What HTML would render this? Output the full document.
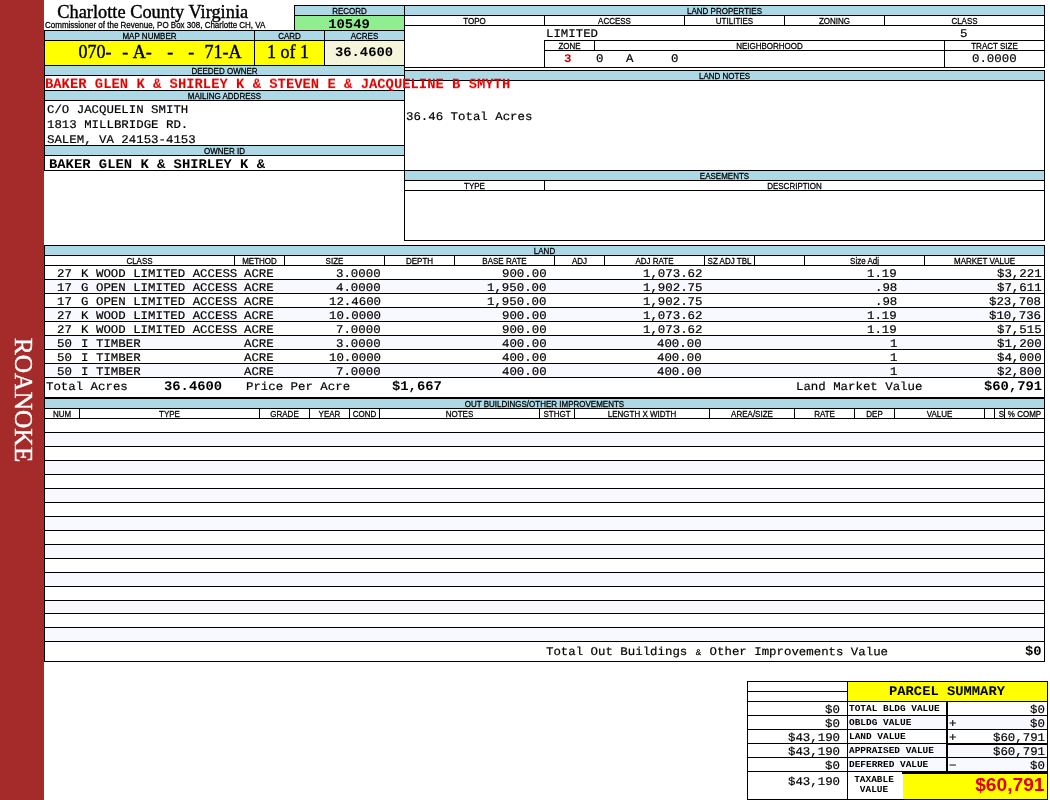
<!DOCTYPE html>
<html><head><meta charset="utf-8"><title>Property Card</title>
<style>
html,body{margin:0;padding:0;background:#fff;}
body{width:1050px;height:800px;position:relative;overflow:hidden;font-family:"Liberation Sans",sans-serif;color:#000;}
.b{position:absolute;box-sizing:border-box;border:1px solid #000;}
.r{position:absolute;}
.x{position:absolute;white-space:pre;}
.s{font-family:"Liberation Sans",sans-serif;}
.t{font-family:"Liberation Serif",serif;-webkit-text-stroke:0.4px #000;}
.m{font-family:"Liberation Mono",monospace;-webkit-text-stroke:0.2px #000;}
.mb{font-family:"Liberation Mono",monospace;font-weight:bold;}
.sb{font-family:"Liberation Sans",sans-serif;font-weight:bold;}
#pg{position:absolute;left:0;top:0;width:1050px;height:800px;will-change:transform;}
</style></head><body><div id="pg">
<div class="r" style="left:0px;top:0px;width:44px;height:800px;background:#A52A2A"></div>
<div class="x t" style="left:-77px;top:385px;width:200px;height:30px;line-height:30px;font-size:25.5px;color:#fff;-webkit-text-stroke:0.4px #fff;text-align:center;transform:rotate(90deg);">ROANOKE</div>
<div class="x t" style="top:1px;font-size:18.35px;line-height:22px;height:22px;left:57.3px;">Charlotte County Virginia</div>
<div class="x s" style="top:20px;font-size:8px;line-height:11px;height:11px;left:45px;transform-origin:50% 8px;transform:scaleY(1.06);-webkit-text-stroke:0.25px #000;">Commissioner of the Revenue, PO Box 308, Charlotte CH, VA</div>
<div class="b" style="left:294px;top:5px;width:111px;height:11px;background:#ADD8E6;"></div>
<div class="x s" style="top:6px;font-size:8px;line-height:11px;height:11px;left:49.5px;width:600px;text-align:center;transform-origin:50% 8px;transform:scaleY(1.06);-webkit-text-stroke:0.25px #000;">RECORD</div>
<div class="b" style="left:294px;top:15px;width:111px;height:16px;background:#90EE90;"></div>
<div class="x mb" style="top:15px;font-size:13.85px;line-height:18px;height:18px;left:49px;width:600px;text-align:center;transform-origin:50% 13px;transform:rotate(0.03deg) scaleY(0.95);">10549</div>
<div class="b" style="left:44px;top:30px;width:211px;height:11px;background:#ADD8E6;"></div>
<div class="x s" style="top:31px;font-size:8px;line-height:11px;height:11px;left:-150.5px;width:600px;text-align:center;transform-origin:50% 8px;transform:scaleY(1.06);-webkit-text-stroke:0.25px #000;">MAP NUMBER</div>
<div class="b" style="left:254px;top:30px;width:71px;height:11px;background:#ADD8E6;"></div>
<div class="x s" style="top:31px;font-size:8px;line-height:11px;height:11px;left:-10.5px;width:600px;text-align:center;transform-origin:50% 8px;transform:scaleY(1.06);-webkit-text-stroke:0.25px #000;">CARD</div>
<div class="b" style="left:324px;top:30px;width:81px;height:11px;background:#ADD8E6;"></div>
<div class="x s" style="top:31px;font-size:8px;line-height:11px;height:11px;left:64.5px;width:600px;text-align:center;transform-origin:50% 8px;transform:scaleY(1.06);-webkit-text-stroke:0.25px #000;">ACRES</div>
<div class="b" style="left:44px;top:40px;width:211px;height:26px;background:#FFFF00;"></div>
<div class="b" style="left:254px;top:40px;width:71px;height:26px;background:#FFFF00;"></div>
<div class="b" style="left:324px;top:40px;width:81px;height:26px;background:#F5F5DC;"></div>
<div class="x t" style="top:41px;font-size:18px;line-height:22px;height:22px;left:78.6px;">070-</div>
<div class="x t" style="top:41px;font-size:18px;line-height:22px;height:22px;left:122.3px;">-</div>
<div class="x t" style="top:41px;font-size:18px;line-height:22px;height:22px;left:132.7px;">A-</div>
<div class="x t" style="top:41px;font-size:18px;line-height:22px;height:22px;left:167.3px;">-</div>
<div class="x t" style="top:41px;font-size:18px;line-height:22px;height:22px;left:188.3px;">-</div>
<div class="x t" style="top:41px;font-size:18px;line-height:22px;height:22px;left:204.6px;">71-A</div>
<div class="x t" style="top:41px;font-size:18px;line-height:22px;height:22px;left:-12px;width:600px;text-align:center;">1 of 1</div>
<div class="x mb" style="top:43px;font-size:13.85px;line-height:18px;height:18px;left:64px;width:600px;text-align:center;transform-origin:50% 13px;transform:rotate(0.03deg) scaleY(0.95);">36.4600</div>
<div class="b" style="left:44px;top:65px;width:361px;height:11px;background:#ADD8E6;"></div>
<div class="x s" style="top:66px;font-size:8px;line-height:11px;height:11px;left:-75.5px;width:600px;text-align:center;transform-origin:50% 8px;transform:scaleY(1.06);-webkit-text-stroke:0.25px #000;">DEEDED OWNER</div>
<div class="b" style="left:44px;top:75px;width:361px;height:16px;"></div>
<div class="b" style="left:44px;top:90px;width:361px;height:11px;background:#ADD8E6;"></div>
<div class="x s" style="top:91px;font-size:8px;line-height:11px;height:11px;left:-75.5px;width:600px;text-align:center;transform-origin:50% 8px;transform:scaleY(1.06);-webkit-text-stroke:0.25px #000;">MAILING ADDRESS</div>
<div class="b" style="left:44px;top:100px;width:361px;height:46px;"></div>
<div class="x m" style="top:102px;font-size:12.4px;line-height:16px;height:16px;left:47px;transform-origin:0 11px;transform:rotate(0.03deg) scaleY(0.95);">C/O JACQUELIN SMITH</div>
<div class="x m" style="top:117px;font-size:12.4px;line-height:16px;height:16px;left:47px;transform-origin:0 11px;transform:rotate(0.03deg) scaleY(0.95);">1813 MILLBRIDGE RD.</div>
<div class="x m" style="top:132px;font-size:12.4px;line-height:16px;height:16px;left:47px;transform-origin:0 11px;transform:rotate(0.03deg) scaleY(0.95);">SALEM, VA 24153-4153</div>
<div class="b" style="left:44px;top:145px;width:361px;height:11px;background:#ADD8E6;"></div>
<div class="x s" style="top:146px;font-size:8px;line-height:11px;height:11px;left:-75.5px;width:600px;text-align:center;transform-origin:50% 8px;transform:scaleY(1.06);-webkit-text-stroke:0.25px #000;">OWNER ID</div>
<div class="b" style="left:44px;top:155px;width:361px;height:16px;"></div>
<div class="x mb" style="top:155px;font-size:13.85px;line-height:18px;height:18px;left:49px;transform-origin:0 13px;transform:rotate(0.03deg) scaleY(0.95);">BAKER GLEN K &amp; SHIRLEY K &amp;</div>
<div class="b" style="left:404px;top:5px;width:641px;height:236px;"></div>
<div class="b" style="left:404px;top:5px;width:641px;height:11px;background:#ADD8E6;"></div>
<div class="x s" style="top:6px;font-size:8px;line-height:11px;height:11px;left:424.5px;width:600px;text-align:center;transform-origin:50% 8px;transform:scaleY(1.06);-webkit-text-stroke:0.25px #000;">LAND PROPERTIES</div>
<div class="b" style="left:404px;top:15px;width:141px;height:11px;"></div>
<div class="x s" style="top:16px;font-size:8px;line-height:11px;height:11px;left:174.5px;width:600px;text-align:center;transform-origin:50% 8px;transform:scaleY(1.06);-webkit-text-stroke:0.25px #000;">TOPO</div>
<div class="b" style="left:544px;top:15px;width:141px;height:11px;"></div>
<div class="x s" style="top:16px;font-size:8px;line-height:11px;height:11px;left:314.5px;width:600px;text-align:center;transform-origin:50% 8px;transform:scaleY(1.06);-webkit-text-stroke:0.25px #000;">ACCESS</div>
<div class="b" style="left:684px;top:15px;width:101px;height:11px;"></div>
<div class="x s" style="top:16px;font-size:8px;line-height:11px;height:11px;left:434.5px;width:600px;text-align:center;transform-origin:50% 8px;transform:scaleY(1.06);-webkit-text-stroke:0.25px #000;">UTILITIES</div>
<div class="b" style="left:784px;top:15px;width:101px;height:11px;"></div>
<div class="x s" style="top:16px;font-size:8px;line-height:11px;height:11px;left:534.5px;width:600px;text-align:center;transform-origin:50% 8px;transform:scaleY(1.06);-webkit-text-stroke:0.25px #000;">ZONING</div>
<div class="b" style="left:884px;top:15px;width:161px;height:11px;"></div>
<div class="x s" style="top:16px;font-size:8px;line-height:11px;height:11px;left:664.5px;width:600px;text-align:center;transform-origin:50% 8px;transform:scaleY(1.06);-webkit-text-stroke:0.25px #000;">CLASS</div>
<div class="b" style="left:404px;top:25px;width:641px;height:43px;"></div>
<div class="b" style="left:544px;top:40px;width:51px;height:11px;"></div>
<div class="x s" style="top:41px;font-size:8px;line-height:11px;height:11px;left:269.5px;width:600px;text-align:center;transform-origin:50% 8px;transform:scaleY(1.06);-webkit-text-stroke:0.25px #000;">ZONE</div>
<div class="b" style="left:594px;top:40px;width:351px;height:11px;"></div>
<div class="x s" style="top:41px;font-size:8px;line-height:11px;height:11px;left:469.5px;width:600px;text-align:center;transform-origin:50% 8px;transform:scaleY(1.06);-webkit-text-stroke:0.25px #000;">NEIGHBORHOOD</div>
<div class="b" style="left:944px;top:40px;width:101px;height:11px;"></div>
<div class="x s" style="top:41px;font-size:8px;line-height:11px;height:11px;left:694.5px;width:600px;text-align:center;transform-origin:50% 8px;transform:scaleY(1.06);-webkit-text-stroke:0.25px #000;">TRACT SIZE</div>
<div class="b" style="left:544px;top:50px;width:401px;height:18px;"></div>
<div class="b" style="left:944px;top:50px;width:101px;height:18px;"></div>
<div class="r" style="left:405px;top:68px;width:640px;height:2px;background:#fff"></div>
<div class="x m" style="top:26px;font-size:12.4px;line-height:16px;height:16px;left:546px;transform-origin:0 11px;transform:rotate(0.03deg) scaleY(0.95);">LIMITED</div>
<div class="x m" style="top:26px;font-size:12.4px;line-height:16px;height:16px;left:960px;transform-origin:0 11px;transform:rotate(0.03deg) scaleY(0.95);">5</div>
<div class="x mb" style="top:50.6px;font-size:12.4px;line-height:16px;height:16px;left:564px;transform-origin:0 11px;transform:rotate(0.03deg) scaleY(0.95);color:#c00;">3</div>
<div class="x m" style="top:50.6px;font-size:12.4px;line-height:16px;height:16px;left:596px;transform-origin:0 11px;transform:rotate(0.03deg) scaleY(0.95);">0</div>
<div class="x m" style="top:50.6px;font-size:12.4px;line-height:16px;height:16px;left:626px;transform-origin:0 11px;transform:rotate(0.03deg) scaleY(0.95);">A</div>
<div class="x m" style="top:50.6px;font-size:12.4px;line-height:16px;height:16px;left:671px;transform-origin:0 11px;transform:rotate(0.03deg) scaleY(0.95);">0</div>
<div class="x m" style="top:50.6px;font-size:12.4px;line-height:16px;height:16px;left:972px;transform-origin:0 11px;transform:rotate(0.03deg) scaleY(0.95);">0.0000</div>
<div class="b" style="left:404px;top:70px;width:641px;height:11px;background:#ADD8E6;"></div>
<div class="x s" style="top:71px;font-size:8px;line-height:11px;height:11px;left:424.5px;width:600px;text-align:center;transform-origin:50% 8px;transform:scaleY(1.06);-webkit-text-stroke:0.25px #000;">LAND NOTES</div>
<div class="x m" style="top:109px;font-size:12.4px;line-height:16px;height:16px;left:406px;transform-origin:0 11px;transform:rotate(0.03deg) scaleY(0.95);">36.46 Total Acres</div>
<div class="b" style="left:404px;top:170px;width:641px;height:11px;background:#ADD8E6;"></div>
<div class="x s" style="top:171px;font-size:8px;line-height:11px;height:11px;left:424.5px;width:600px;text-align:center;transform-origin:50% 8px;transform:scaleY(1.06);-webkit-text-stroke:0.25px #000;">EASEMENTS</div>
<div class="b" style="left:404px;top:180px;width:141px;height:11px;"></div>
<div class="x s" style="top:181px;font-size:8px;line-height:11px;height:11px;left:174.5px;width:600px;text-align:center;transform-origin:50% 8px;transform:scaleY(1.06);-webkit-text-stroke:0.25px #000;">TYPE</div>
<div class="b" style="left:544px;top:180px;width:501px;height:11px;"></div>
<div class="x s" style="top:181px;font-size:8px;line-height:11px;height:11px;left:494.5px;width:600px;text-align:center;transform-origin:50% 8px;transform:scaleY(1.06);-webkit-text-stroke:0.25px #000;">DESCRIPTION</div>
<div class="x mb" style="top:75px;font-size:13.85px;line-height:18px;height:18px;left:45px;transform-origin:0 13px;transform:rotate(0.03deg) scaleY(0.95);color:#e00000;">BAKER GLEN K &amp; SHIRLEY K &amp; STEVEN E &amp; JACQUELINE B SMYTH</div>
<div class="b" style="left:44px;top:245px;width:1001px;height:11px;background:#ADD8E6;"></div>
<div class="x s" style="top:246px;font-size:8px;line-height:11px;height:11px;left:244.5px;width:600px;text-align:center;transform-origin:50% 8px;transform:scaleY(1.06);-webkit-text-stroke:0.25px #000;">LAND</div>
<div class="b" style="left:44px;top:255px;width:191px;height:11px;"></div>
<div class="x s" style="top:256px;font-size:8px;line-height:11px;height:11px;left:-160.5px;width:600px;text-align:center;transform-origin:50% 8px;transform:scaleY(1.06);-webkit-text-stroke:0.25px #000;">CLASS</div>
<div class="b" style="left:234px;top:255px;width:51px;height:11px;"></div>
<div class="x s" style="top:256px;font-size:8px;line-height:11px;height:11px;left:-40.5px;width:600px;text-align:center;transform-origin:50% 8px;transform:scaleY(1.06);-webkit-text-stroke:0.25px #000;">METHOD</div>
<div class="b" style="left:284px;top:255px;width:101px;height:11px;"></div>
<div class="x s" style="top:256px;font-size:8px;line-height:11px;height:11px;left:34.5px;width:600px;text-align:center;transform-origin:50% 8px;transform:scaleY(1.06);-webkit-text-stroke:0.25px #000;">SIZE</div>
<div class="b" style="left:384px;top:255px;width:71px;height:11px;"></div>
<div class="x s" style="top:256px;font-size:8px;line-height:11px;height:11px;left:119.5px;width:600px;text-align:center;transform-origin:50% 8px;transform:scaleY(1.06);-webkit-text-stroke:0.25px #000;">DEPTH</div>
<div class="b" style="left:454px;top:255px;width:101px;height:11px;"></div>
<div class="x s" style="top:256px;font-size:8px;line-height:11px;height:11px;left:204.5px;width:600px;text-align:center;transform-origin:50% 8px;transform:scaleY(1.06);-webkit-text-stroke:0.25px #000;">BASE RATE</div>
<div class="b" style="left:554px;top:255px;width:51px;height:11px;"></div>
<div class="x s" style="top:256px;font-size:8px;line-height:11px;height:11px;left:279.5px;width:600px;text-align:center;transform-origin:50% 8px;transform:scaleY(1.06);-webkit-text-stroke:0.25px #000;">ADJ</div>
<div class="b" style="left:604px;top:255px;width:101px;height:11px;"></div>
<div class="x s" style="top:256px;font-size:8px;line-height:11px;height:11px;left:354.5px;width:600px;text-align:center;transform-origin:50% 8px;transform:scaleY(1.06);-webkit-text-stroke:0.25px #000;">ADJ RATE</div>
<div class="b" style="left:704px;top:255px;width:51px;height:11px;"></div>
<div class="x s" style="top:256px;font-size:8px;line-height:11px;height:11px;left:429.5px;width:600px;text-align:center;transform-origin:50% 8px;transform:scaleY(1.06);-webkit-text-stroke:0.25px #000;">SZ ADJ TBL</div>
<div class="b" style="left:754px;top:255px;width:51px;height:11px;"></div>
<div class="b" style="left:804px;top:255px;width:121px;height:11px;"></div>
<div class="x s" style="top:256px;font-size:8px;line-height:11px;height:11px;left:564.5px;width:600px;text-align:center;transform-origin:50% 8px;transform:scaleY(1.06);-webkit-text-stroke:0.25px #000;">Size Adj</div>
<div class="b" style="left:924px;top:255px;width:121px;height:11px;"></div>
<div class="x s" style="top:256px;font-size:8px;line-height:11px;height:11px;left:684.5px;width:600px;text-align:center;transform-origin:50% 8px;transform:scaleY(1.06);-webkit-text-stroke:0.25px #000;">MARKET VALUE</div>
<div class="b" style="left:44px;top:265px;width:1001px;height:15px;background:#fff;"></div>
<div class="x m" style="top:266px;font-size:12.4px;line-height:16px;height:16px;left:57px;transform-origin:0 11px;transform:rotate(0.03deg) scaleY(0.95);">27</div>
<div class="x m" style="top:266px;font-size:12.4px;line-height:16px;height:16px;left:80.5px;transform-origin:0 11px;transform:rotate(0.03deg) scaleY(0.95);">K</div>
<div class="x m" style="top:266px;font-size:12.4px;line-height:16px;height:16px;left:95.5px;transform-origin:0 11px;transform:rotate(0.03deg) scaleY(0.95);">WOOD LIMITED ACCESS</div>
<div class="x m" style="top:266px;font-size:12.4px;line-height:16px;height:16px;left:243.5px;transform-origin:0 11px;transform:rotate(0.03deg) scaleY(0.95);">ACRE</div>
<div class="x m" style="top:266px;font-size:12.4px;line-height:16px;height:16px;right:669px;text-align:right;transform-origin:100% 11px;transform:rotate(0.03deg) scaleY(0.95);">3.0000</div>
<div class="x m" style="top:266px;font-size:12.4px;line-height:16px;height:16px;right:503.5px;text-align:right;transform-origin:100% 11px;transform:rotate(0.03deg) scaleY(0.95);">900.00</div>
<div class="x m" style="top:266px;font-size:12.4px;line-height:16px;height:16px;right:348px;text-align:right;transform-origin:100% 11px;transform:rotate(0.03deg) scaleY(0.95);">1,073.62</div>
<div class="x m" style="top:266px;font-size:12.4px;line-height:16px;height:16px;right:153px;text-align:right;transform-origin:100% 11px;transform:rotate(0.03deg) scaleY(0.95);">1.19</div>
<div class="x m" style="top:266px;font-size:12.4px;line-height:16px;height:16px;right:8.5px;text-align:right;transform-origin:100% 11px;transform:rotate(0.03deg) scaleY(0.95);">$3,221</div>
<div class="b" style="left:44px;top:279px;width:1001px;height:15px;background:#F8F8FF;"></div>
<div class="x m" style="top:280px;font-size:12.4px;line-height:16px;height:16px;left:57px;transform-origin:0 11px;transform:rotate(0.03deg) scaleY(0.95);">17</div>
<div class="x m" style="top:280px;font-size:12.4px;line-height:16px;height:16px;left:80.5px;transform-origin:0 11px;transform:rotate(0.03deg) scaleY(0.95);">G</div>
<div class="x m" style="top:280px;font-size:12.4px;line-height:16px;height:16px;left:95.5px;transform-origin:0 11px;transform:rotate(0.03deg) scaleY(0.95);">OPEN LIMITED ACCESS</div>
<div class="x m" style="top:280px;font-size:12.4px;line-height:16px;height:16px;left:243.5px;transform-origin:0 11px;transform:rotate(0.03deg) scaleY(0.95);">ACRE</div>
<div class="x m" style="top:280px;font-size:12.4px;line-height:16px;height:16px;right:669px;text-align:right;transform-origin:100% 11px;transform:rotate(0.03deg) scaleY(0.95);">4.0000</div>
<div class="x m" style="top:280px;font-size:12.4px;line-height:16px;height:16px;right:503.5px;text-align:right;transform-origin:100% 11px;transform:rotate(0.03deg) scaleY(0.95);">1,950.00</div>
<div class="x m" style="top:280px;font-size:12.4px;line-height:16px;height:16px;right:348px;text-align:right;transform-origin:100% 11px;transform:rotate(0.03deg) scaleY(0.95);">1,902.75</div>
<div class="x m" style="top:280px;font-size:12.4px;line-height:16px;height:16px;right:153px;text-align:right;transform-origin:100% 11px;transform:rotate(0.03deg) scaleY(0.95);">.98</div>
<div class="x m" style="top:280px;font-size:12.4px;line-height:16px;height:16px;right:8.5px;text-align:right;transform-origin:100% 11px;transform:rotate(0.03deg) scaleY(0.95);">$7,611</div>
<div class="b" style="left:44px;top:293px;width:1001px;height:15px;background:#fff;"></div>
<div class="x m" style="top:294px;font-size:12.4px;line-height:16px;height:16px;left:57px;transform-origin:0 11px;transform:rotate(0.03deg) scaleY(0.95);">17</div>
<div class="x m" style="top:294px;font-size:12.4px;line-height:16px;height:16px;left:80.5px;transform-origin:0 11px;transform:rotate(0.03deg) scaleY(0.95);">G</div>
<div class="x m" style="top:294px;font-size:12.4px;line-height:16px;height:16px;left:95.5px;transform-origin:0 11px;transform:rotate(0.03deg) scaleY(0.95);">OPEN LIMITED ACCESS</div>
<div class="x m" style="top:294px;font-size:12.4px;line-height:16px;height:16px;left:243.5px;transform-origin:0 11px;transform:rotate(0.03deg) scaleY(0.95);">ACRE</div>
<div class="x m" style="top:294px;font-size:12.4px;line-height:16px;height:16px;right:669px;text-align:right;transform-origin:100% 11px;transform:rotate(0.03deg) scaleY(0.95);">12.4600</div>
<div class="x m" style="top:294px;font-size:12.4px;line-height:16px;height:16px;right:503.5px;text-align:right;transform-origin:100% 11px;transform:rotate(0.03deg) scaleY(0.95);">1,950.00</div>
<div class="x m" style="top:294px;font-size:12.4px;line-height:16px;height:16px;right:348px;text-align:right;transform-origin:100% 11px;transform:rotate(0.03deg) scaleY(0.95);">1,902.75</div>
<div class="x m" style="top:294px;font-size:12.4px;line-height:16px;height:16px;right:153px;text-align:right;transform-origin:100% 11px;transform:rotate(0.03deg) scaleY(0.95);">.98</div>
<div class="x m" style="top:294px;font-size:12.4px;line-height:16px;height:16px;right:8.5px;text-align:right;transform-origin:100% 11px;transform:rotate(0.03deg) scaleY(0.95);">$23,708</div>
<div class="b" style="left:44px;top:307px;width:1001px;height:15px;background:#F8F8FF;"></div>
<div class="x m" style="top:308px;font-size:12.4px;line-height:16px;height:16px;left:57px;transform-origin:0 11px;transform:rotate(0.03deg) scaleY(0.95);">27</div>
<div class="x m" style="top:308px;font-size:12.4px;line-height:16px;height:16px;left:80.5px;transform-origin:0 11px;transform:rotate(0.03deg) scaleY(0.95);">K</div>
<div class="x m" style="top:308px;font-size:12.4px;line-height:16px;height:16px;left:95.5px;transform-origin:0 11px;transform:rotate(0.03deg) scaleY(0.95);">WOOD LIMITED ACCESS</div>
<div class="x m" style="top:308px;font-size:12.4px;line-height:16px;height:16px;left:243.5px;transform-origin:0 11px;transform:rotate(0.03deg) scaleY(0.95);">ACRE</div>
<div class="x m" style="top:308px;font-size:12.4px;line-height:16px;height:16px;right:669px;text-align:right;transform-origin:100% 11px;transform:rotate(0.03deg) scaleY(0.95);">10.0000</div>
<div class="x m" style="top:308px;font-size:12.4px;line-height:16px;height:16px;right:503.5px;text-align:right;transform-origin:100% 11px;transform:rotate(0.03deg) scaleY(0.95);">900.00</div>
<div class="x m" style="top:308px;font-size:12.4px;line-height:16px;height:16px;right:348px;text-align:right;transform-origin:100% 11px;transform:rotate(0.03deg) scaleY(0.95);">1,073.62</div>
<div class="x m" style="top:308px;font-size:12.4px;line-height:16px;height:16px;right:153px;text-align:right;transform-origin:100% 11px;transform:rotate(0.03deg) scaleY(0.95);">1.19</div>
<div class="x m" style="top:308px;font-size:12.4px;line-height:16px;height:16px;right:8.5px;text-align:right;transform-origin:100% 11px;transform:rotate(0.03deg) scaleY(0.95);">$10,736</div>
<div class="b" style="left:44px;top:321px;width:1001px;height:15px;background:#fff;"></div>
<div class="x m" style="top:322px;font-size:12.4px;line-height:16px;height:16px;left:57px;transform-origin:0 11px;transform:rotate(0.03deg) scaleY(0.95);">27</div>
<div class="x m" style="top:322px;font-size:12.4px;line-height:16px;height:16px;left:80.5px;transform-origin:0 11px;transform:rotate(0.03deg) scaleY(0.95);">K</div>
<div class="x m" style="top:322px;font-size:12.4px;line-height:16px;height:16px;left:95.5px;transform-origin:0 11px;transform:rotate(0.03deg) scaleY(0.95);">WOOD LIMITED ACCESS</div>
<div class="x m" style="top:322px;font-size:12.4px;line-height:16px;height:16px;left:243.5px;transform-origin:0 11px;transform:rotate(0.03deg) scaleY(0.95);">ACRE</div>
<div class="x m" style="top:322px;font-size:12.4px;line-height:16px;height:16px;right:669px;text-align:right;transform-origin:100% 11px;transform:rotate(0.03deg) scaleY(0.95);">7.0000</div>
<div class="x m" style="top:322px;font-size:12.4px;line-height:16px;height:16px;right:503.5px;text-align:right;transform-origin:100% 11px;transform:rotate(0.03deg) scaleY(0.95);">900.00</div>
<div class="x m" style="top:322px;font-size:12.4px;line-height:16px;height:16px;right:348px;text-align:right;transform-origin:100% 11px;transform:rotate(0.03deg) scaleY(0.95);">1,073.62</div>
<div class="x m" style="top:322px;font-size:12.4px;line-height:16px;height:16px;right:153px;text-align:right;transform-origin:100% 11px;transform:rotate(0.03deg) scaleY(0.95);">1.19</div>
<div class="x m" style="top:322px;font-size:12.4px;line-height:16px;height:16px;right:8.5px;text-align:right;transform-origin:100% 11px;transform:rotate(0.03deg) scaleY(0.95);">$7,515</div>
<div class="b" style="left:44px;top:335px;width:1001px;height:15px;background:#F8F8FF;"></div>
<div class="x m" style="top:336px;font-size:12.4px;line-height:16px;height:16px;left:57px;transform-origin:0 11px;transform:rotate(0.03deg) scaleY(0.95);">50</div>
<div class="x m" style="top:336px;font-size:12.4px;line-height:16px;height:16px;left:80.5px;transform-origin:0 11px;transform:rotate(0.03deg) scaleY(0.95);">I</div>
<div class="x m" style="top:336px;font-size:12.4px;line-height:16px;height:16px;left:95.5px;transform-origin:0 11px;transform:rotate(0.03deg) scaleY(0.95);">TIMBER</div>
<div class="x m" style="top:336px;font-size:12.4px;line-height:16px;height:16px;left:243.5px;transform-origin:0 11px;transform:rotate(0.03deg) scaleY(0.95);">ACRE</div>
<div class="x m" style="top:336px;font-size:12.4px;line-height:16px;height:16px;right:669px;text-align:right;transform-origin:100% 11px;transform:rotate(0.03deg) scaleY(0.95);">3.0000</div>
<div class="x m" style="top:336px;font-size:12.4px;line-height:16px;height:16px;right:503.5px;text-align:right;transform-origin:100% 11px;transform:rotate(0.03deg) scaleY(0.95);">400.00</div>
<div class="x m" style="top:336px;font-size:12.4px;line-height:16px;height:16px;right:348px;text-align:right;transform-origin:100% 11px;transform:rotate(0.03deg) scaleY(0.95);">400.00</div>
<div class="x m" style="top:336px;font-size:12.4px;line-height:16px;height:16px;right:153px;text-align:right;transform-origin:100% 11px;transform:rotate(0.03deg) scaleY(0.95);">1</div>
<div class="x m" style="top:336px;font-size:12.4px;line-height:16px;height:16px;right:8.5px;text-align:right;transform-origin:100% 11px;transform:rotate(0.03deg) scaleY(0.95);">$1,200</div>
<div class="b" style="left:44px;top:349px;width:1001px;height:15px;background:#fff;"></div>
<div class="x m" style="top:350px;font-size:12.4px;line-height:16px;height:16px;left:57px;transform-origin:0 11px;transform:rotate(0.03deg) scaleY(0.95);">50</div>
<div class="x m" style="top:350px;font-size:12.4px;line-height:16px;height:16px;left:80.5px;transform-origin:0 11px;transform:rotate(0.03deg) scaleY(0.95);">I</div>
<div class="x m" style="top:350px;font-size:12.4px;line-height:16px;height:16px;left:95.5px;transform-origin:0 11px;transform:rotate(0.03deg) scaleY(0.95);">TIMBER</div>
<div class="x m" style="top:350px;font-size:12.4px;line-height:16px;height:16px;left:243.5px;transform-origin:0 11px;transform:rotate(0.03deg) scaleY(0.95);">ACRE</div>
<div class="x m" style="top:350px;font-size:12.4px;line-height:16px;height:16px;right:669px;text-align:right;transform-origin:100% 11px;transform:rotate(0.03deg) scaleY(0.95);">10.0000</div>
<div class="x m" style="top:350px;font-size:12.4px;line-height:16px;height:16px;right:503.5px;text-align:right;transform-origin:100% 11px;transform:rotate(0.03deg) scaleY(0.95);">400.00</div>
<div class="x m" style="top:350px;font-size:12.4px;line-height:16px;height:16px;right:348px;text-align:right;transform-origin:100% 11px;transform:rotate(0.03deg) scaleY(0.95);">400.00</div>
<div class="x m" style="top:350px;font-size:12.4px;line-height:16px;height:16px;right:153px;text-align:right;transform-origin:100% 11px;transform:rotate(0.03deg) scaleY(0.95);">1</div>
<div class="x m" style="top:350px;font-size:12.4px;line-height:16px;height:16px;right:8.5px;text-align:right;transform-origin:100% 11px;transform:rotate(0.03deg) scaleY(0.95);">$4,000</div>
<div class="b" style="left:44px;top:363px;width:1001px;height:15px;background:#F8F8FF;"></div>
<div class="x m" style="top:364px;font-size:12.4px;line-height:16px;height:16px;left:57px;transform-origin:0 11px;transform:rotate(0.03deg) scaleY(0.95);">50</div>
<div class="x m" style="top:364px;font-size:12.4px;line-height:16px;height:16px;left:80.5px;transform-origin:0 11px;transform:rotate(0.03deg) scaleY(0.95);">I</div>
<div class="x m" style="top:364px;font-size:12.4px;line-height:16px;height:16px;left:95.5px;transform-origin:0 11px;transform:rotate(0.03deg) scaleY(0.95);">TIMBER</div>
<div class="x m" style="top:364px;font-size:12.4px;line-height:16px;height:16px;left:243.5px;transform-origin:0 11px;transform:rotate(0.03deg) scaleY(0.95);">ACRE</div>
<div class="x m" style="top:364px;font-size:12.4px;line-height:16px;height:16px;right:669px;text-align:right;transform-origin:100% 11px;transform:rotate(0.03deg) scaleY(0.95);">7.0000</div>
<div class="x m" style="top:364px;font-size:12.4px;line-height:16px;height:16px;right:503.5px;text-align:right;transform-origin:100% 11px;transform:rotate(0.03deg) scaleY(0.95);">400.00</div>
<div class="x m" style="top:364px;font-size:12.4px;line-height:16px;height:16px;right:348px;text-align:right;transform-origin:100% 11px;transform:rotate(0.03deg) scaleY(0.95);">400.00</div>
<div class="x m" style="top:364px;font-size:12.4px;line-height:16px;height:16px;right:153px;text-align:right;transform-origin:100% 11px;transform:rotate(0.03deg) scaleY(0.95);">1</div>
<div class="x m" style="top:364px;font-size:12.4px;line-height:16px;height:16px;right:8.5px;text-align:right;transform-origin:100% 11px;transform:rotate(0.03deg) scaleY(0.95);">$2,800</div>
<div class="b" style="left:44px;top:377px;width:1001px;height:21px;"></div>
<div class="x m" style="top:379px;font-size:12.4px;line-height:16px;height:16px;left:46px;transform-origin:0 11px;transform:rotate(0.03deg) scaleY(0.95);">Total Acres</div>
<div class="x mb" style="top:377px;font-size:13.85px;line-height:18px;height:18px;left:164px;transform-origin:0 13px;transform:rotate(0.03deg) scaleY(0.95);">36.4600</div>
<div class="x m" style="top:379px;font-size:12.4px;line-height:16px;height:16px;left:246px;transform-origin:0 11px;transform:rotate(0.03deg) scaleY(0.95);">Price Per Acre</div>
<div class="x mb" style="top:377px;font-size:13.85px;line-height:18px;height:18px;left:392px;transform-origin:0 13px;transform:rotate(0.03deg) scaleY(0.95);">$1,667</div>
<div class="x m" style="top:379px;font-size:12.4px;line-height:16px;height:16px;left:796px;transform-origin:0 11px;transform:rotate(0.03deg) scaleY(0.95);">Land Market Value</div>
<div class="x mb" style="top:377px;font-size:13.85px;line-height:18px;height:18px;right:8px;text-align:right;transform-origin:100% 13px;transform:rotate(0.03deg) scaleY(0.95);">$60,791</div>
<div class="b" style="left:44px;top:398px;width:1001px;height:11px;background:#ADD8E6;"></div>
<div class="x s" style="top:399px;font-size:8px;line-height:11px;height:11px;left:244.5px;width:600px;text-align:center;transform-origin:50% 8px;transform:scaleY(1.06);-webkit-text-stroke:0.25px #000;">OUT BUILDINGS/OTHER IMPROVEMENTS</div>
<div class="b" style="left:44px;top:408px;width:36px;height:11px;"></div>
<div class="x s" style="top:409px;font-size:8px;line-height:11px;height:11px;left:-238.0px;width:600px;text-align:center;transform-origin:50% 8px;transform:scaleY(1.06);-webkit-text-stroke:0.25px #000;">NUM</div>
<div class="b" style="left:79px;top:408px;width:181px;height:11px;"></div>
<div class="x s" style="top:409px;font-size:8px;line-height:11px;height:11px;left:-130.5px;width:600px;text-align:center;transform-origin:50% 8px;transform:scaleY(1.06);-webkit-text-stroke:0.25px #000;">TYPE</div>
<div class="b" style="left:259px;top:408px;width:51px;height:11px;"></div>
<div class="x s" style="top:409px;font-size:8px;line-height:11px;height:11px;left:-15.5px;width:600px;text-align:center;transform-origin:50% 8px;transform:scaleY(1.06);-webkit-text-stroke:0.25px #000;">GRADE</div>
<div class="b" style="left:309px;top:408px;width:41px;height:11px;"></div>
<div class="x s" style="top:409px;font-size:8px;line-height:11px;height:11px;left:29.5px;width:600px;text-align:center;transform-origin:50% 8px;transform:scaleY(1.06);-webkit-text-stroke:0.25px #000;">YEAR</div>
<div class="b" style="left:349px;top:408px;width:31px;height:11px;"></div>
<div class="x s" style="top:409px;font-size:8px;line-height:11px;height:11px;left:64.5px;width:600px;text-align:center;transform-origin:50% 8px;transform:scaleY(1.06);-webkit-text-stroke:0.25px #000;">COND</div>
<div class="b" style="left:379px;top:408px;width:161px;height:11px;"></div>
<div class="x s" style="top:409px;font-size:8px;line-height:11px;height:11px;left:159.5px;width:600px;text-align:center;transform-origin:50% 8px;transform:scaleY(1.06);-webkit-text-stroke:0.25px #000;">NOTES</div>
<div class="b" style="left:539px;top:408px;width:36px;height:11px;"></div>
<div class="x s" style="top:409px;font-size:8px;line-height:11px;height:11px;left:257.0px;width:600px;text-align:center;transform-origin:50% 8px;transform:scaleY(1.06);-webkit-text-stroke:0.25px #000;">STHGT</div>
<div class="b" style="left:574px;top:408px;width:136px;height:11px;"></div>
<div class="x s" style="top:409px;font-size:8px;line-height:11px;height:11px;left:342.0px;width:600px;text-align:center;transform-origin:50% 8px;transform:scaleY(1.06);-webkit-text-stroke:0.25px #000;">LENGTH X WIDTH</div>
<div class="b" style="left:709px;top:408px;width:86px;height:11px;"></div>
<div class="x s" style="top:409px;font-size:8px;line-height:11px;height:11px;left:452.0px;width:600px;text-align:center;transform-origin:50% 8px;transform:scaleY(1.06);-webkit-text-stroke:0.25px #000;">AREA/SIZE</div>
<div class="b" style="left:794px;top:408px;width:61px;height:11px;"></div>
<div class="x s" style="top:409px;font-size:8px;line-height:11px;height:11px;left:524.5px;width:600px;text-align:center;transform-origin:50% 8px;transform:scaleY(1.06);-webkit-text-stroke:0.25px #000;">RATE</div>
<div class="b" style="left:854px;top:408px;width:41px;height:11px;"></div>
<div class="x s" style="top:409px;font-size:8px;line-height:11px;height:11px;left:574.5px;width:600px;text-align:center;transform-origin:50% 8px;transform:scaleY(1.06);-webkit-text-stroke:0.25px #000;">DEP</div>
<div class="b" style="left:894px;top:408px;width:91px;height:11px;"></div>
<div class="x s" style="top:409px;font-size:8px;line-height:11px;height:11px;left:639.5px;width:600px;text-align:center;transform-origin:50% 8px;transform:scaleY(1.06);-webkit-text-stroke:0.25px #000;">VALUE</div>
<div class="b" style="left:984px;top:408px;width:11px;height:11px;"></div>
<div class="b" style="left:994px;top:408px;width:11px;height:11px;"></div>
<div class="x s" style="top:409px;font-size:8px;line-height:11px;height:11px;left:701.5px;width:600px;text-align:center;transform-origin:50% 8px;transform:scaleY(1.06);-webkit-text-stroke:0.25px #000;">S</div>
<div class="b" style="left:1004px;top:408px;width:41px;height:11px;"></div>
<div class="x s" style="top:409px;font-size:8px;line-height:11px;height:11px;left:724.5px;width:600px;text-align:center;transform-origin:50% 8px;transform:scaleY(1.06);-webkit-text-stroke:0.25px #000;">% COMP</div>
<div class="b" style="left:44px;top:418px;width:1001px;height:15px;background:#fff;"></div>
<div class="b" style="left:44px;top:432px;width:1001px;height:15px;background:#F8F8FF;"></div>
<div class="b" style="left:44px;top:446px;width:1001px;height:15px;background:#fff;"></div>
<div class="b" style="left:44px;top:460px;width:1001px;height:15px;background:#F8F8FF;"></div>
<div class="b" style="left:44px;top:474px;width:1001px;height:15px;background:#fff;"></div>
<div class="b" style="left:44px;top:488px;width:1001px;height:15px;background:#F8F8FF;"></div>
<div class="b" style="left:44px;top:502px;width:1001px;height:15px;background:#fff;"></div>
<div class="b" style="left:44px;top:516px;width:1001px;height:15px;background:#F8F8FF;"></div>
<div class="b" style="left:44px;top:530px;width:1001px;height:15px;background:#fff;"></div>
<div class="b" style="left:44px;top:544px;width:1001px;height:15px;background:#F8F8FF;"></div>
<div class="b" style="left:44px;top:558px;width:1001px;height:15px;background:#fff;"></div>
<div class="b" style="left:44px;top:572px;width:1001px;height:15px;background:#F8F8FF;"></div>
<div class="b" style="left:44px;top:586px;width:1001px;height:15px;background:#fff;"></div>
<div class="b" style="left:44px;top:600px;width:1001px;height:14px;background:#F8F8FF;"></div>
<div class="b" style="left:44px;top:613px;width:1001px;height:15px;background:#fff;"></div>
<div class="b" style="left:44px;top:627px;width:1001px;height:15px;background:#F8F8FF;"></div>
<div class="b" style="left:44px;top:641px;width:1001px;height:21px;background:#fff;"></div>
<div class="x m" style="top:644px;font-size:12.4px;line-height:16px;height:16px;left:545.5px;transform-origin:0 11px;transform:rotate(0.03deg) scaleY(0.95);">Total Out Buildings <span style="display:inline-block;width:7.44px;font-size:9px;text-align:center">&amp;</span> Other Improvements Value</div>
<div class="x mb" style="top:642px;font-size:13.85px;line-height:18px;height:18px;right:8px;text-align:right;transform-origin:100% 13px;transform:rotate(0.03deg) scaleY(0.95);">$0</div>
<div class="b" style="left:747px;top:681px;width:301px;height:119px;"></div>
<div class="b" style="left:747px;top:681px;width:101px;height:11px;"></div>
<div class="b" style="left:747px;top:691px;width:101px;height:11px;"></div>
<div class="b" style="left:847px;top:681px;width:201px;height:21px;background:#FFFF00;"></div>
<div class="x mb" style="top:683px;font-size:13.8px;line-height:17px;height:17px;left:647px;width:600px;text-align:center;transform-origin:50% 12px;transform:rotate(0.03deg) scaleY(0.95);">PARCEL SUMMARY</div>
<div class="b" style="left:747px;top:701px;width:101px;height:15px;"></div>
<div class="b" style="left:847px;top:701px;width:101px;height:15px;background:#fff;"></div>
<div class="b" style="left:947px;top:701px;width:101px;height:15px;background:#fff;"></div>
<div class="x m" style="top:702px;font-size:12.4px;line-height:16px;height:16px;right:210px;text-align:right;transform-origin:100% 11px;transform:rotate(0.03deg) scaleY(0.95);">$0</div>
<div class="x mb" style="top:702px;font-size:9.45px;line-height:13px;height:13px;left:849px;transform-origin:0 9px;transform:rotate(0.03deg) scaleY(0.95);">TOTAL BLDG VALUE</div>
<div class="x m" style="top:702px;font-size:12.4px;line-height:16px;height:16px;right:5px;text-align:right;transform-origin:100% 11px;transform:rotate(0.03deg) scaleY(0.95);">$0</div>
<div class="b" style="left:747px;top:715px;width:101px;height:15px;"></div>
<div class="b" style="left:847px;top:715px;width:101px;height:15px;background:#F8F8FF;"></div>
<div class="b" style="left:947px;top:715px;width:101px;height:15px;background:#F8F8FF;"></div>
<div class="x m" style="top:716px;font-size:12.4px;line-height:16px;height:16px;right:210px;text-align:right;transform-origin:100% 11px;transform:rotate(0.03deg) scaleY(0.95);">$0</div>
<div class="x mb" style="top:716px;font-size:9.45px;line-height:13px;height:13px;left:849px;transform-origin:0 9px;transform:rotate(0.03deg) scaleY(0.95);">OBLDG VALUE</div>
<div class="x m" style="top:716px;font-size:12.4px;line-height:16px;height:16px;right:5px;text-align:right;transform-origin:100% 11px;transform:rotate(0.03deg) scaleY(0.95);">$0</div>
<div class="x m" style="top:716px;font-size:12.4px;line-height:16px;height:16px;left:949px;transform-origin:0 11px;transform:rotate(0.03deg) scaleY(0.95);">+</div>
<div class="b" style="left:747px;top:729px;width:101px;height:15px;"></div>
<div class="b" style="left:847px;top:729px;width:101px;height:15px;background:#fff;"></div>
<div class="b" style="left:947px;top:729px;width:101px;height:15px;background:#fff;"></div>
<div class="x m" style="top:730px;font-size:12.4px;line-height:16px;height:16px;right:210px;text-align:right;transform-origin:100% 11px;transform:rotate(0.03deg) scaleY(0.95);">$43,190</div>
<div class="x mb" style="top:730px;font-size:9.45px;line-height:13px;height:13px;left:849px;transform-origin:0 9px;transform:rotate(0.03deg) scaleY(0.95);">LAND VALUE</div>
<div class="x m" style="top:730px;font-size:12.4px;line-height:16px;height:16px;right:5px;text-align:right;transform-origin:100% 11px;transform:rotate(0.03deg) scaleY(0.95);">$60,791</div>
<div class="x m" style="top:730px;font-size:12.4px;line-height:16px;height:16px;left:949px;transform-origin:0 11px;transform:rotate(0.03deg) scaleY(0.95);">+</div>
<div class="b" style="left:747px;top:743px;width:101px;height:15px;"></div>
<div class="b" style="left:847px;top:743px;width:101px;height:15px;background:#F8F8FF;"></div>
<div class="b" style="left:947px;top:743px;width:101px;height:15px;background:#F8F8FF;"></div>
<div class="x m" style="top:744px;font-size:12.4px;line-height:16px;height:16px;right:210px;text-align:right;transform-origin:100% 11px;transform:rotate(0.03deg) scaleY(0.95);">$43,190</div>
<div class="x mb" style="top:744px;font-size:9.45px;line-height:13px;height:13px;left:849px;transform-origin:0 9px;transform:rotate(0.03deg) scaleY(0.95);">APPRAISED VALUE</div>
<div class="x m" style="top:744px;font-size:12.4px;line-height:16px;height:16px;right:5px;text-align:right;transform-origin:100% 11px;transform:rotate(0.03deg) scaleY(0.95);">$60,791</div>
<div class="b" style="left:747px;top:757px;width:101px;height:15px;"></div>
<div class="b" style="left:847px;top:757px;width:101px;height:15px;background:#F8F8FF;"></div>
<div class="b" style="left:947px;top:757px;width:101px;height:15px;background:#F8F8FF;"></div>
<div class="x m" style="top:758px;font-size:12.4px;line-height:16px;height:16px;right:210px;text-align:right;transform-origin:100% 11px;transform:rotate(0.03deg) scaleY(0.95);">$0</div>
<div class="x mb" style="top:758px;font-size:9.45px;line-height:13px;height:13px;left:849px;transform-origin:0 9px;transform:rotate(0.03deg) scaleY(0.95);">DEFERRED VALUE</div>
<div class="x m" style="top:758px;font-size:12.4px;line-height:16px;height:16px;right:5px;text-align:right;transform-origin:100% 11px;transform:rotate(0.03deg) scaleY(0.95);">$0</div>
<div class="x m" style="top:758px;font-size:12.4px;line-height:16px;height:16px;left:949px;transform-origin:0 11px;transform:rotate(0.03deg) scaleY(0.95);">&minus;</div>
<div class="r" style="left:946px;top:701px;width:2px;height:71px;background:#000"></div>
<div class="r" style="left:947px;top:743px;width:101px;height:2px;background:#000"></div>
<div class="b" style="left:747px;top:771px;width:101px;height:29px;"></div>
<div class="x m" style="top:774px;font-size:12.4px;line-height:16px;height:16px;right:210px;text-align:right;transform-origin:100% 11px;transform:rotate(0.03deg) scaleY(0.95);">$43,190</div>
<div class="r" style="left:903px;top:774px;width:144px;height:25px;background:#FFFF00"></div>
<div class="r" style="left:902px;top:771px;width:146px;height:3px;background:#000"></div>
<div class="x mb" style="top:773px;font-size:9.45px;line-height:13px;height:13px;left:573.5px;width:600px;text-align:center;transform-origin:50% 9px;transform:rotate(0.03deg) scaleY(0.95);">TAXABLE</div>
<div class="x mb" style="top:783px;font-size:9.45px;line-height:13px;height:13px;left:573.5px;width:600px;text-align:center;transform-origin:50% 9px;transform:rotate(0.03deg) scaleY(0.95);">VALUE</div>
<div class="x sb" style="top:773px;font-size:19.2px;line-height:23px;height:23px;right:5.5px;text-align:right;color:#e00000;">$60,791</div>
</div></body></html>
